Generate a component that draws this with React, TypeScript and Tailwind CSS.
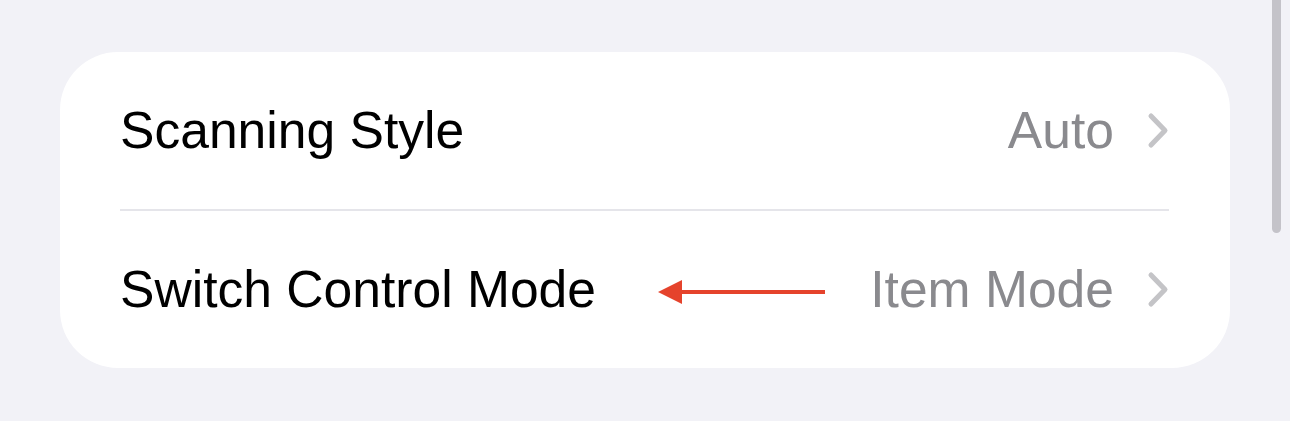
import React from 'react';

type Row = {
  label: string;
  value: string;
  pointer?: boolean;
};

const rows: Row[] = [
  { label: 'Scanning Style', value: 'Auto' },
  { label: 'Switch Control Mode', value: 'Item Mode', pointer: true },
];

const Chevron = () => (
  <svg width="22" height="37" viewBox="0 0 22 37" className="shrink-0">
    <polyline
      points="4,4 18,18.5 4,33"
      fill="none"
      stroke="#c4c4c7"
      strokeWidth="5"
      strokeLinecap="round"
      strokeLinejoin="round"
    />
  </svg>
);

const RedArrow = () => (
  <svg width="167" height="26" viewBox="0 0 167 26" className="shrink-0">
    <line x1="20" y1="13" x2="167" y2="13" stroke="#e5432c" strokeWidth="4" />
    <polygon points="0,13 24,1 24,25" fill="#e5432c" />
  </svg>
);

const App = () => {
  return (
    <div
      className="relative h-[421px] w-[1290px] overflow-hidden bg-[#f2f2f7] pl-[60px] pt-[52px]"
      style={{ fontFamily: '"Liberation Sans", Arial, sans-serif' }}
    >
      <div className="flex w-[1170px] flex-col rounded-[58px] bg-white pl-[60px] pr-[61px]">
        {rows.map((row, i) => (
          <div key={row.label}>
            {i > 0 && <div className="h-[2px] bg-[#e5e5ea]" />}
            <div className="flex h-[157px] items-center">
              <span className="text-[51.6px] leading-none text-black">
                {row.label}
              </span>
              {row.pointer && (
                <div className="ml-[62px] mt-[4px] flex items-center">
                  <RedArrow />
                </div>
              )}
              <span className="ml-auto text-[51.6px] leading-none text-[#8a8a8e]">
                {row.value}
              </span>
              <div className="ml-[33px]">
                <Chevron />
              </div>
            </div>
          </div>
        ))}
      </div>
      {/* scroll indicator */}
      <div className="absolute right-[9px] top-[-10px] h-[243px] w-[9px] rounded-full bg-[#c4c3c9]" />
    </div>
  );
};

export default App;
